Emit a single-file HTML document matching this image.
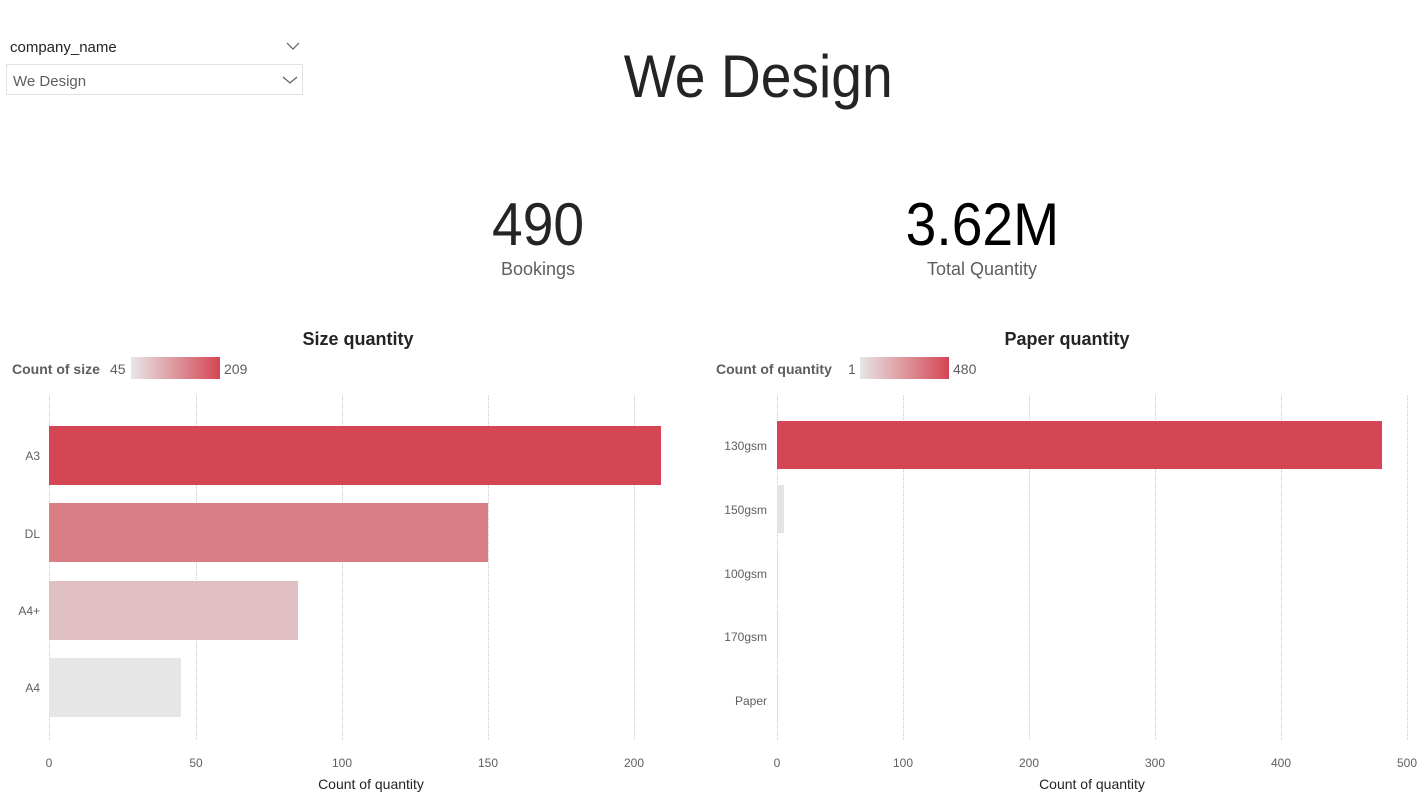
<!DOCTYPE html>
<html><head><meta charset="utf-8"><style>
body{margin:0;width:1424px;height:796px;background:#fff;font-family:"Liberation Sans",sans-serif;position:relative;overflow:hidden;color:#252423}
.a{position:absolute}
.grid{position:absolute;top:395px;height:345px;border-left:1px dotted #c8c8c8;width:0}
.tick{position:absolute;top:756px;font-size:12px;color:#605e5c;transform:translateX(-50%)}
.lab{position:absolute;font-size:12px;color:#605e5c;text-align:right}
.bar{position:absolute}
.sq{display:inline-block;transform:scaleX(0.92)}
</style></head><body>
<div class="a" style="left:10px;top:39px;font-size:15px;color:#252423">company_name</div>
<svg class="a" style="left:286px;top:42px" width="14" height="9"><path d="M1 1 L7 7 L13 1" fill="none" stroke="#605e5c" stroke-width="1.2"/></svg>
<div class="a" style="left:6px;top:64px;width:295px;height:29px;border:1px solid #e1e1e1"></div>
<div class="a" style="left:13px;top:73px;font-size:15px;color:#605e5c">We Design</div>
<svg class="a" style="left:282px;top:76px" width="16" height="9"><path d="M1 1 L8 7 L15 1" fill="none" stroke="#605e5c" stroke-width="1.2"/></svg>
<div class="a" style="left:0;width:1516px;top:42px;text-align:center;font-size:60px;color:#252423"><span class="sq">We Design</span></div>
<div class="a" style="left:438px;width:200px;top:190px;text-align:center;font-size:60px;color:#252423"><span class="sq">490</span></div>
<div class="a" style="left:438px;width:200px;top:259px;text-align:center;font-size:18px;color:#605e5c">Bookings</div>
<div class="a" style="left:882px;width:200px;top:190px;text-align:center;font-size:60px;color:#000"><span class="sq">3.62M</span></div>
<div class="a" style="left:882px;width:200px;top:259px;text-align:center;font-size:18px;color:#605e5c">Total Quantity</div>

<div class="a" style="left:258px;width:200px;top:329px;text-align:center;font-size:18px;font-weight:bold">Size quantity</div>
<div class="a" style="left:12px;top:361px;font-size:14px;font-weight:bold;color:#605e5c">Count of size</div>
<div class="a" style="left:110px;top:361px;font-size:14px;color:#605e5c">45</div>
<div class="a" style="left:131px;top:357px;width:89px;height:22px;background:linear-gradient(90deg,#e6e6e6,#d44653)"></div>
<div class="a" style="left:224px;top:361px;font-size:14px;color:#605e5c">209</div>
<div class="grid" style="left:49px"></div><div class="grid" style="left:196px"></div><div class="grid" style="left:342px"></div><div class="grid" style="left:488px"></div><div class="grid" style="left:634px"></div>
<div class="bar" style="left:49px;top:426px;width:612px;height:59px;background:#d44653"></div>
<div class="bar" style="left:49px;top:503px;width:439px;height:59px;background:#d97e85"></div>
<div class="bar" style="left:49px;top:581px;width:249px;height:59px;background:#e0bfc2"></div>
<div class="bar" style="left:49px;top:658px;width:132px;height:59px;background:#e6e6e6"></div>
<div class="lab" style="left:0;width:40px;top:449px">A3</div>
<div class="lab" style="left:0;width:40px;top:527px">DL</div>
<div class="lab" style="left:0;width:40px;top:604px">A4+</div>
<div class="lab" style="left:0;width:40px;top:681px">A4</div>
<div class="tick" style="left:49px">0</div><div class="tick" style="left:196px">50</div><div class="tick" style="left:342px">100</div><div class="tick" style="left:488px">150</div><div class="tick" style="left:634px">200</div>
<div class="a" style="left:271px;width:200px;top:776px;text-align:center;font-size:14px">Count of quantity</div>

<div class="a" style="left:967px;width:200px;top:329px;text-align:center;font-size:18px;font-weight:bold">Paper quantity</div>
<div class="a" style="left:716px;top:361px;font-size:14px;font-weight:bold;color:#605e5c">Count of quantity</div>
<div class="a" style="left:848px;top:361px;font-size:14px;color:#605e5c">1</div>
<div class="a" style="left:860px;top:357px;width:89px;height:22px;background:linear-gradient(90deg,#e6e6e6,#d44653)"></div>
<div class="a" style="left:953px;top:361px;font-size:14px;color:#605e5c">480</div>
<div class="grid" style="left:777px"></div><div class="grid" style="left:903px"></div><div class="grid" style="left:1029px"></div><div class="grid" style="left:1155px"></div><div class="grid" style="left:1281px"></div><div class="grid" style="left:1407px"></div>
<div class="bar" style="left:777px;top:421px;width:605px;height:48px;background:#d44653"></div>
<div class="bar" style="left:777px;top:485px;width:7px;height:48px;background:#e5e3e3"></div>
<div class="bar" style="left:777px;top:549px;width:1px;height:48px;background:#dcdcdc"></div>
<div class="bar" style="left:777px;top:612px;width:1px;height:48px;background:#dcdcdc"></div>
<div class="bar" style="left:777px;top:676px;width:1px;height:48px;background:#dcdcdc"></div>
<div class="lab" style="left:700px;width:67px;top:439px">130gsm</div>
<div class="lab" style="left:700px;width:67px;top:503px">150gsm</div>
<div class="lab" style="left:700px;width:67px;top:567px">100gsm</div>
<div class="lab" style="left:700px;width:67px;top:630px">170gsm</div>
<div class="lab" style="left:700px;width:67px;top:694px">Paper</div>
<div class="tick" style="left:777px">0</div><div class="tick" style="left:903px">100</div><div class="tick" style="left:1029px">200</div><div class="tick" style="left:1155px">300</div><div class="tick" style="left:1281px">400</div><div class="tick" style="left:1407px">500</div>
<div class="a" style="left:992px;width:200px;top:776px;text-align:center;font-size:14px">Count of quantity</div>
</body></html>
